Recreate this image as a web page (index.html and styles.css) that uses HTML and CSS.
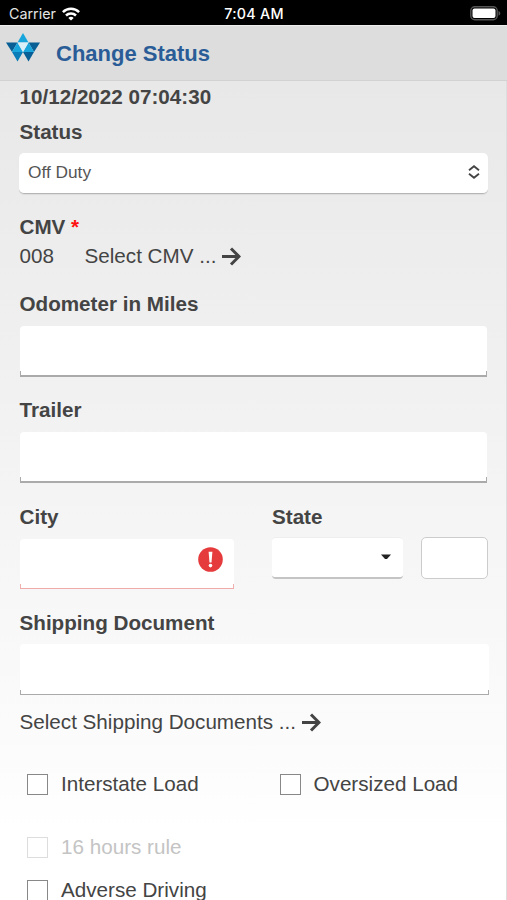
FILE: index.html
```html
<!DOCTYPE html>
<html lang="en">
<head>
<meta charset="utf-8">
<title>Change Status</title>
<link rel="stylesheet" href="styles.css">
</head>
<body>
<div class="statusbar">
  <div class="carrier"><span>Carrier</span>
    <svg width="18" height="14" viewBox="0 0 18 14" fill="none" stroke="#fff" stroke-width="2.5"><path d="M.9 5.100a11.600 11.600 0 0 1 16.200 0M4 8.500a7.200 7.200 0 0 1 10 0"/><path d="M9 13.600 6.300 10.900a4 4 0 0 1 5.400 0Z" fill="#fff" stroke="none"/></svg>
  </div>
  <span class="time">7:04 AM</span>
  <svg class="battery" width="31" height="15" viewBox="0 0 31 15"><rect x=".8" y=".8" width="26.400" height="13" rx="4" fill="#000" stroke="#555" stroke-width="1.400"/><rect x="2.500" y="2.500" width="23" height="9.600" rx="2" fill="#fff"/><path d="M28.500 5c2.400.8 2.400 4 0 4.700Z" fill="#555"/></svg>
</div>
<header class="header">
  <svg class="logo" width="34" height="29" viewBox="0 0 34 29">
    <path d="M17 0 22.500 9.500h-11Z" fill="#18a5dc"/>
    <path d="M0 9.500h11.500L6 19Z" fill="#075f96"/><path d="M22.500 9.500H34L28 19Z" fill="#075f96"/>
    <path d="M11.500 9.500 17 19H6Z" fill="#18a5dc"/><path d="M22.500 9.500 28 19H17Z" fill="#18a5dc"/>
    <path d="M11.500 9.500h11L17 19Z" fill="#d9f0f8"/>
    <path d="M6 19h11l-5.500 9.500Z" fill="#087db8"/><path d="M17 19h11l-5.500 9.500Z" fill="#075f96"/>
  </svg>
  <h1>Change Status</h1>
</header>
<main class="form">
  <div class="date label">10/12/2022 07:04:30</div>
  <div class="field status">
    <div class="label">Status</div>
    <div class="select"><span>Off Duty</span>
      <svg width="12" height="14" viewBox="0 0 12 14" fill="none" stroke="#444" stroke-width="1.900"><path d="M1 5.300 6 1.300l5 4M1 8.700l5 4 5-4"/></svg>
    </div>
  </div>
  <div class="field cmv">
    <div class="label">CMV <span class="required">*</span></div>
    <div class="link"><span class="unit">008</span><span>Select CMV ...</span>
      <svg width="19" height="19" viewBox="0 0 19 19" fill="none" stroke="#444" stroke-width="3"><path d="M0 9.500h17M9 1.500l8 8-8 8"/></svg>
    </div>
  </div>
  <div class="field"><div class="label">Odometer in Miles</div><div class="input"></div></div>
  <div class="field"><div class="label">Trailer</div><div class="input"></div></div>
  <div class="place">
    <div class="city"><div class="label">City</div>
      <div class="input invalid">
        <svg width="25" height="25" viewBox="0 0 25 25"><circle cx="12.500" cy="12.500" r="12.300" fill="#e63b3d"/><path d="M10.600 4.800h3.800l-.9 10.700h-2Z" fill="#fff"/><circle cx="12.500" cy="18.600" r="1.800" fill="#fff"/></svg>
      </div>
    </div>
    <div class="state"><div class="label">State</div>
      <div class="state-row">
        <div class="dropdown"><svg width="10" height="6" viewBox="0 0 10 6"><path d="M0 .5h10L6 5H4Z" fill="#222"/></svg></div>
        <div class="code"></div>
      </div>
    </div>
  </div>
  <div class="field ship"><div class="label">Shipping Document</div><div class="input wide"></div></div>
  <div class="link documents"><span>Select Shipping Documents ...</span>
    <svg width="19" height="19" viewBox="0 0 19 19" fill="none" stroke="#444" stroke-width="3"><path d="M0 9.500h17M9 1.500l8 8-8 8"/></svg>
  </div>
  <div class="checks">
    <div class="check"><i class="box"></i><span>Interstate Load</span></div>
    <div class="check"><i class="box"></i><span>Oversized Load</span></div>
    <div class="check disabled"><i class="box"></i><span>16 hours rule</span></div>
    <div class="check last"><i class="box"></i><span>Adverse Driving</span></div>
  </div>
</main>
</body>
</html>
```
FILE: styles.css
```css
* { box-sizing: border-box; }
html, body { height: 900px; overflow: hidden; }
body {
  margin: 0;
  display: flex;
  flex-direction: column;
  font: 20.650px/24px "Liberation Sans", Arial, sans-serif;
  color: #444;
}
svg { display: block; flex: none; }
.statusbar {
  height: 25px;
  flex: none;
  background: #000;
  color: #fff;
  display: grid;
  grid-template-columns: 1fr auto 1fr;
  align-items: center;
  padding: 2px 6px 0 9px;
  font: 14.300px/20px Inter, sans-serif;
}
.carrier { display: flex; align-items: center; gap: 6px; color: #e4e4e4; }
.time { font-weight: 500; letter-spacing: .25px; margin-left: -2px; }
.battery { justify-self: end; }
.header {
  height: 56px;
  flex: none;
  display: flex;
  align-items: flex-start;
  gap: 16px;
  padding: 7px 6px 0;
  background: #ddd;
  border-top: 1px solid #eee;
  border-bottom: 1px solid #d2d2d2;
}
h1 { margin: 9px 0 0; font-size: 22px; line-height: 24px; color: #2a5d97; }
.form {
  flex: 1;
  min-height: 0;
  overflow: hidden;
  padding: 4px 18px 0 19.500px;
  background: linear-gradient(#e8e8e8, #fcfcfc 83%, #fff 92%);
  border-right: 1px solid #ddd;
}
.label { height: 24px; font-weight: bold; white-space: nowrap; }
.status { margin: 11px 0 21px -.5px; }
.status .label { padding-left: .5px; }
.select {
  height: 41px;
  margin-top: 9px;
  padding: 0 8px 2px 9px;
  display: flex;
  align-items: center;
  justify-content: space-between;
  background: #fff;
  border-radius: 5px;
  border-bottom: 1px solid #b5b5b5;
  box-shadow: 0 1px 1px #ddd;
  font-size: 17.300px;
  color: #555;
}
.required { color: #f11; }
.link { height: 24px; display: flex; align-items: center; gap: 6px; white-space: nowrap; }
.cmv .link { margin: 5px 0 24px; }
.unit { width: 59px; }
.input {
  height: 51px;
  margin: 10px 1px 21px .5px;
  background:
    linear-gradient(#aaa, #aaa) 0 100% / 1px 4px no-repeat,
    linear-gradient(#aaa, #aaa) 100% 100% / 1px 4px no-repeat,
    #fff;
  border-bottom: 2px solid #aaa;
  border-radius: 4px 4px 0 0;
}
.field + .place { margin-top: 22px; }
.place { display: flex; gap: 38px; }
.city { width: 214.500px; }
.input.invalid {
  height: 50px;
  margin: 10px 0 22px .5px;
  padding: 8px 11px 0 0;
  display: flex;
  justify-content: flex-end;
  background:
    linear-gradient(#f0b0b0, #f0b0b0) 0 100% / 1px 4px no-repeat,
    linear-gradient(#f0b0b0, #f0b0b0) 100% 100% / 1px 4px no-repeat,
    #fff;
  border-bottom: 1px solid #f0aaaa;
}
.state { flex: 1; }
.state-row { display: flex; gap: 18px; margin-top: 8px; }
.dropdown {
  width: 131px;
  height: 42px;
  padding: 0 12px 2px 0;
  display: flex;
  align-items: center;
  justify-content: flex-end;
  background: #fff;
  border-radius: 4px;
  border-top: 1px solid #eee;
  border-bottom: 2px solid #c4c4c4;
}
.code { width: 67px; height: 42px; background: #fff; border: 1px solid #ccc; border-radius: 5px; }
.input.wide { height: 51px; margin: 9px -1px 15px .5px; border-bottom-width: 1px; }
.checks {
  display: grid;
  grid-template-columns: 252.500px 1fr;
  grid-template-rows: 24px 24px 24px;
  margin-top: 38px;
  padding-left: 7.500px;
}
.check { display: flex; align-items: center; gap: 13px; white-space: nowrap; }
.box { flex: none; width: 21px; height: 21px; background: #fff; border: 1px solid #888; }
.disabled { grid-column: 1; margin: 39px 0 -39px; color: #c4c4c4; }
.disabled .box { border-color: #ddd; }
.last { grid-column: 1; margin: 58px 0 -58px; }
```
